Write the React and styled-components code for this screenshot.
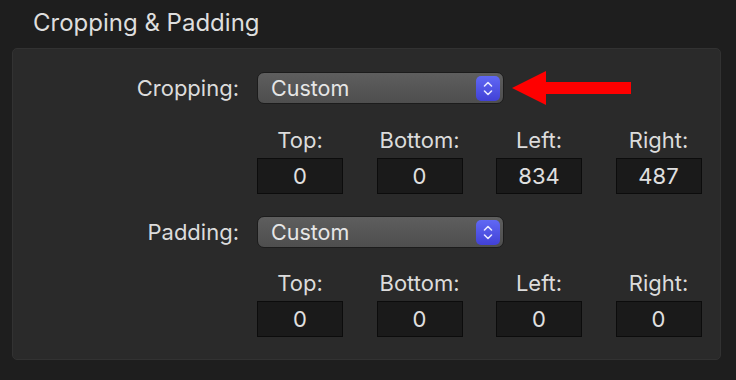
import React from 'react';
import styled, { createGlobalStyle } from 'styled-components';

const GlobalStyle = createGlobalStyle`
  html, body {
    margin: 0;
    padding: 0;
    background: #1e1e1e;
  }
  body {
    font-family: Inter, "Liberation Sans", sans-serif;
    color: #e2e2e2;
    -webkit-font-smoothing: antialiased;
  }
`;

const Page = styled.div`
  width: 736px;
  height: 380px;
  box-sizing: border-box;
  padding: 0 15px 0 12px;
  background: #1e1e1e;
`;

const Title = styled.h2`
  margin: 0;
  height: 48px;
  padding-left: 21px;
  display: flex;
  align-items: center;
  font-size: 24px;
  font-weight: 400;
  color: #dedede;
  padding-bottom: 4px;
  box-sizing: border-box;
`;

const Panel = styled.div`
  box-sizing: border-box;
  height: 312px;
  background: #2a2a2a;
  border: 1px solid #323232;
  border-radius: 5px;
  padding: 23px 0 0 0;
  display: grid;
  grid-template-columns: 226px 1fr;
  column-gap: 18px;
  align-content: start;
`;

const Label = styled.div`
  justify-self: end;
  align-self: start;
  height: 32px;
  display: flex;
  align-items: center;
  font-size: 22px;
  color: #dcdcdc;
`;

const ControlRow = styled.div`
  display: flex;
  align-items: center;
  height: 32px;
`;

const Select = styled.div`
  box-sizing: border-box;
  width: 247px;
  height: 32px;
  border-radius: 7px;
  border: 1px solid #1c1c1c;
  background: linear-gradient(#5e5e5e, #4e4e4e);
  display: flex;
  align-items: center;
  justify-content: space-between;
  padding: 0 3px 0 13px;
  font-size: 21.5px;
  color: #e6e6e6;
`;

const Stepper = styled.div`
  width: 24px;
  height: 25px;
  border-radius: 5px;
  background: linear-gradient(#6068f4, #4141d6);
  display: flex;
  align-items: center;
  justify-content: center;
`;

const Fields = styled.div`
  grid-column: 2;
  display: grid;
  grid-template-columns: repeat(4, 86px);
  column-gap: 33.5px;
  margin: ${(p) => p.$top}px 0 ${(p) => p.$bottom}px;
`;

const Field = styled.div`
  display: flex;
  flex-direction: column;
  align-items: center;
  gap: 6px;
`;

const FieldLabel = styled.div`
  height: 24px;
  display: flex;
  align-items: center;
  font-size: 22px;
  color: #dcdcdc;
`;

const Box = styled.div`
  box-sizing: border-box;
  width: 86px;
  height: 36px;
  background: #1a1a1a;
  border: 1px solid #0c0c0c;
  display: flex;
  align-items: center;
  justify-content: center;
  font-size: 22px;
  color: #e0e0e0;
`;

const Arrow = styled.svg`
  margin-left: 8px;
  flex: none;
`;

const Chevrons = () => (
  <svg width="12" height="17" viewBox="0 0 12 17">
    <path d="M2.5 6 L6 2.5 L9.5 6" fill="none" stroke="#e8e8ff" strokeWidth="1.6" strokeLinecap="round" strokeLinejoin="round" />
    <path d="M2.5 11 L6 14.5 L9.5 11" fill="none" stroke="#e8e8ff" strokeWidth="1.6" strokeLinecap="round" strokeLinejoin="round" />
  </svg>
);

const sides = ['Top:', 'Bottom:', 'Left:', 'Right:'];

const FieldGroup = ({ values, top, bottom }) => (
  <Fields $top={top} $bottom={bottom}>
    {sides.map((s, i) => (
      <Field key={s}>
        <FieldLabel>{s}</FieldLabel>
        <Box>{values[i]}</Box>
      </Field>
    ))}
  </Fields>
);

export default function App() {
  return (
    <Page>
      <GlobalStyle />
      <Title>Cropping &amp; Padding</Title>
      <Panel>
        <Label>Cropping:</Label>
        <ControlRow>
          <Select>
            Custom
            <Stepper><Chevrons /></Stepper>
          </Select>
          <Arrow width="120" height="34" viewBox="0 0 120 34">
            <polygon points="0,17 34,0 34,11 119,11 119,23 34,23 34,34" fill="#ff0000" />
          </Arrow>
        </ControlRow>
        <FieldGroup values={['0', '0', '834', '487']} top={24} bottom={22} />
        <Label>Padding:</Label>
        <ControlRow>
          <Select>
            Custom
            <Stepper><Chevrons /></Stepper>
          </Select>
        </ControlRow>
        <FieldGroup values={['0', '0', '0', '0']} top={23} bottom={0} />
      </Panel>
    </Page>
  );
}
